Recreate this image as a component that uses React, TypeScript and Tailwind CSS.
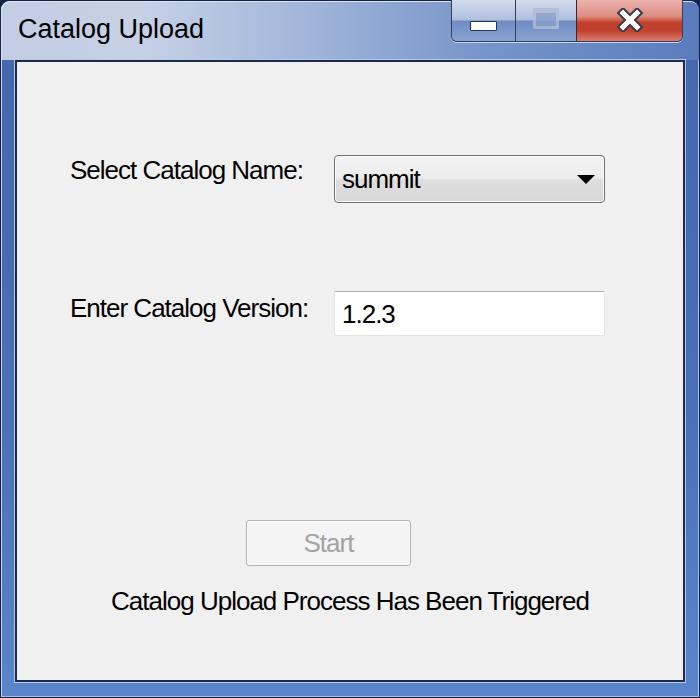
function TitleButtons() {
  return (
    <div className="-mt-px flex h-[42px] overflow-hidden rounded-b-[6px] border border-t-0 border-[#2f3f5f] shadow-[0_1px_0_#c9d6ee]">
      <div className="flex w-[64px] justify-center border-r border-[#2f3f5f] bg-[linear-gradient(180deg,#d3dcec_0%,#aebfdd_48%,#6f8cc3_52%,#8aa3d1_100%)] pt-[21px]">
        <div className="h-[10px] w-[27px] rounded-[1px] border border-[#2a3450] bg-white" />
      </div>
      <div className="flex w-[61px] justify-center border-r border-[#3b2630] bg-[linear-gradient(180deg,#d3dcec_0%,#aebfdd_48%,#6f8cc3_52%,#8aa3d1_100%)] pt-[8px]">
        <div className="h-[21px] w-[26px] rounded-[1px] border-[3px] border-t-[5px] border-[#b0bdd6] bg-[#8a9fca] opacity-80" />
      </div>
      <div className="flex w-[105px] justify-center bg-[linear-gradient(180deg,#ecb3ad_0%,#dc8c80_40%,#c2402c_55%,#c0412f_75%,#dc7d6c_100%)] pt-[8px]">
        <svg width="28" height="24" viewBox="0 0 28 24">
          <path d="M7 5 L21 19 M21 5 L7 19" stroke="#3c3c46" strokeWidth="9" strokeLinecap="square" />
          <path d="M7 5 L21 19 M21 5 L7 19" stroke="#ffffff" strokeWidth="5" strokeLinecap="square" />
        </svg>
      </div>
    </div>
  );
}

export default function App() {
  const label = "text-[26px] leading-none tracking-[-1px] text-black";

  return (
    <div className="h-[698px] w-[700px] bg-[#14244a] font-['Liberation_Sans',Arial,sans-serif]">
      <div className="flex h-full flex-col rounded-t-[10px] border border-[#142142] bg-[linear-gradient(180deg,#4466ad_0%,#4a70b8_60%,#5b85ca_100%)] shadow-[inset_1px_1px_0_#c3d1ea,inset_-1px_-1px_0_#a8bde0]">
        {/* title bar */}
        <div className="flex h-[59px] items-start justify-between rounded-t-[9px] bg-[linear-gradient(90deg,#c2cde3_0%,#c6d1e6_20%,#9fb4d9_45%,#7594c9_70%,#5a7cbd_100%)] pl-[17px] pr-[16px] shadow-[inset_1px_1px_0_#dbe4f3]">
          <div className="pt-[15px] text-[27px] leading-none text-black">Catalog Upload</div>
          <TitleButtons />
        </div>

        {/* client area */}
        <div className="flex flex-1 px-[14px] pb-[15px]">
          <div className="flex flex-1 flex-col border-2 border-[#1c2b4d] bg-[#f0f0f0] pt-[93px] shadow-[0_0_0_1px_#b6c8e6]">
            <div className="flex h-[48px] items-start pl-[53px]">
              <div className={`${label} w-[264px] pt-[2px]`}>Select Catalog Name:</div>
              <div className="flex h-[48px] w-[271px] items-center justify-between rounded-[4px] border border-[#707070] bg-[linear-gradient(180deg,#f4f4f4_0%,#ececec_48%,#dfdfdf_52%,#d8d8d8_100%)] pl-[7px] pr-[9px] shadow-[inset_0_0_0_1px_#fbfbfb]">
                <span className={label}>summit</span>
                <svg width="18" height="9" viewBox="0 0 18 9">
                  <path d="M0 0 H18 L9 9 Z" fill="#000" />
                </svg>
              </div>
            </div>

            <div className="mt-[88px] flex h-[45px] items-start pl-[53px]">
              <div className={`${label} w-[264px] pt-[4px]`}>Enter Catalog Version:</div>
              <div className="flex h-[45px] w-[271px] items-center rounded-[2px] border border-[#e2e3ea] border-t-[#abadb3] bg-white pl-[7px]">
                <span className={label}>1.2.3</span>
              </div>
            </div>

            <div className="mt-[184px] flex pl-[229px]">
              <div className="flex h-[46px] w-[165px] items-center justify-center rounded-[3px] border border-[#adb2b5] bg-[#f4f4f4] shadow-[inset_0_0_0_1px_#fcfcfc]">
                <span className="text-[26px] leading-none tracking-[-1px] text-[#a3a3a3]">Start</span>
              </div>
            </div>

            <div className={`${label} mt-[22px] text-center`}>
              Catalog Upload Process Has Been Triggered
            </div>
          </div>
        </div>
      </div>
    </div>
  );
}
